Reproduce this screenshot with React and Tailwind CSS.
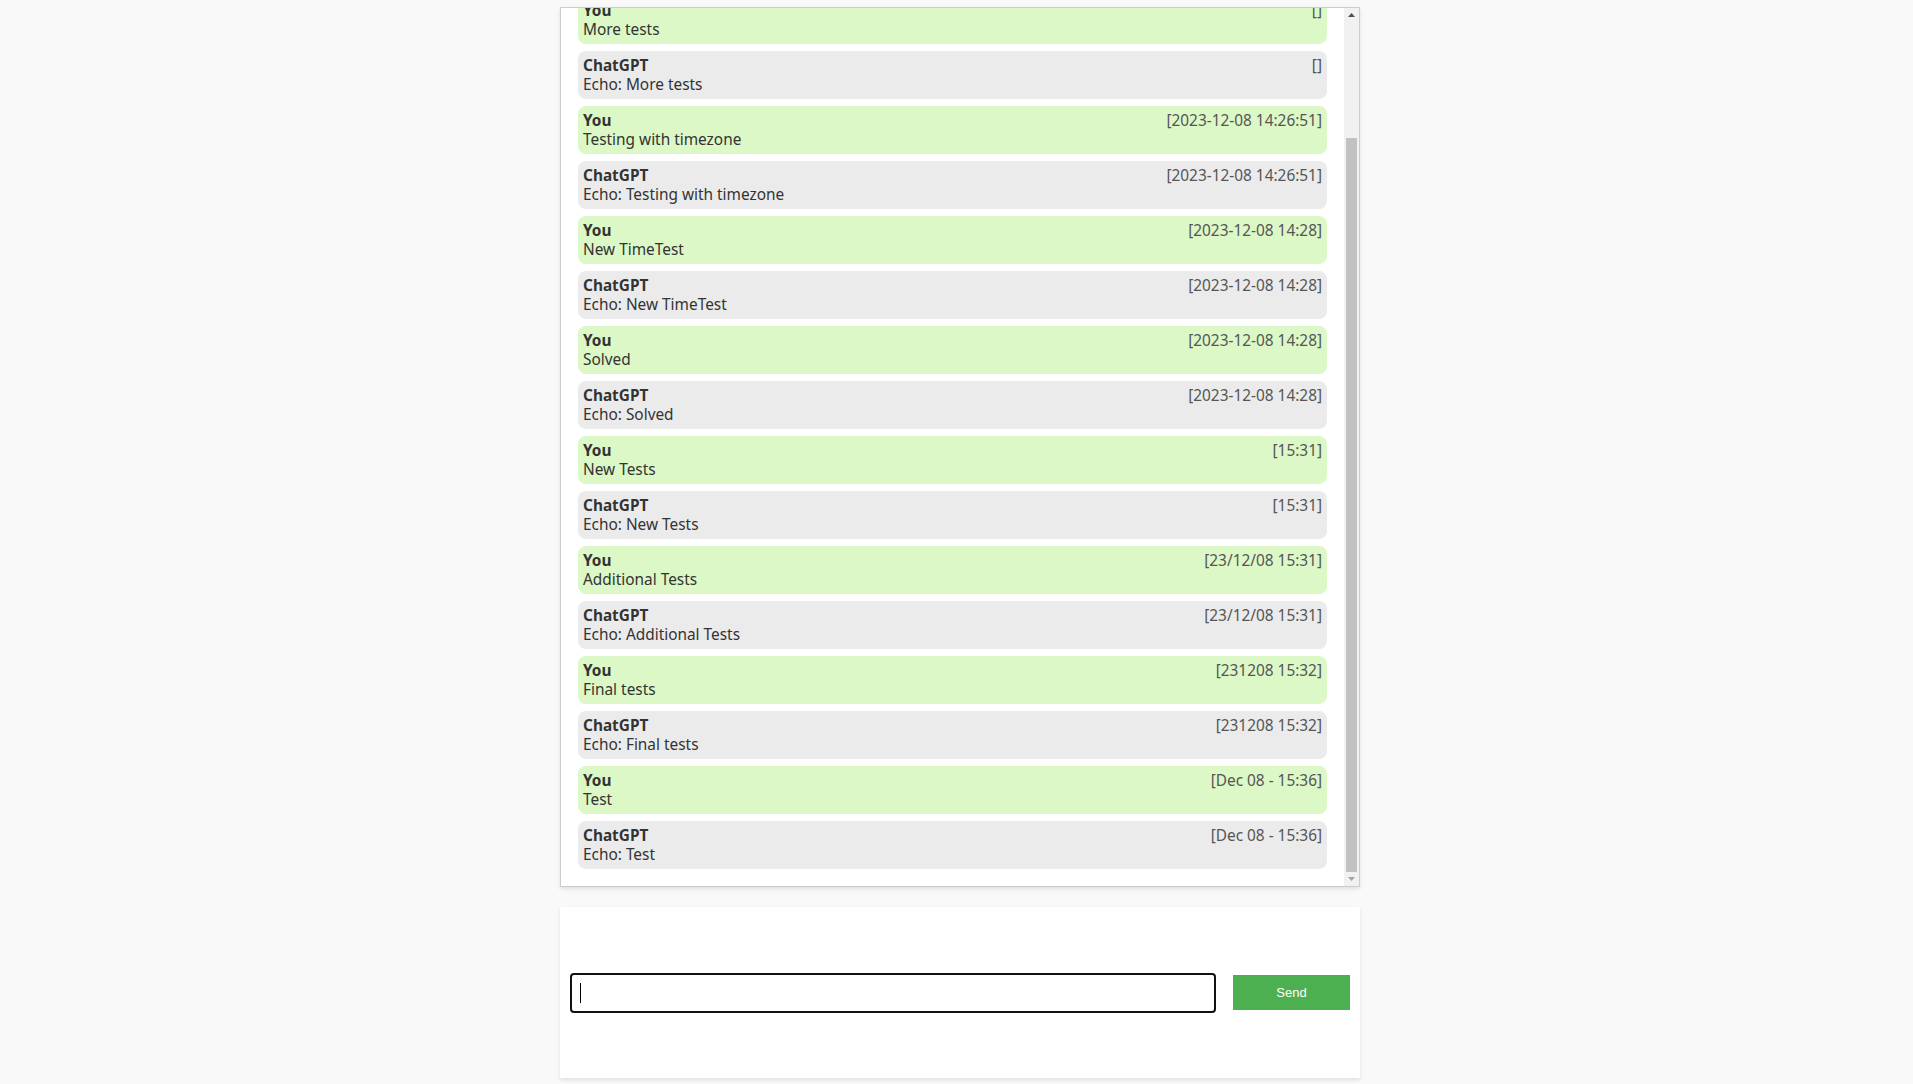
import React, { useEffect, useRef } from 'react';

const messages = [
  { from: 'You', time: '[]', text: 'Hello' },
  { from: 'ChatGPT', time: '[]', text: 'Echo: Hello' },
  { from: 'You', time: '[]', text: 'More tests' },
  { from: 'ChatGPT', time: '[]', text: 'Echo: More tests' },
  { from: 'You', time: '[2023-12-08 14:26:51]', text: 'Testing with timezone' },
  { from: 'ChatGPT', time: '[2023-12-08 14:26:51]', text: 'Echo: Testing with timezone' },
  { from: 'You', time: '[2023-12-08 14:28]', text: 'New TimeTest' },
  { from: 'ChatGPT', time: '[2023-12-08 14:28]', text: 'Echo: New TimeTest' },
  { from: 'You', time: '[2023-12-08 14:28]', text: 'Solved' },
  { from: 'ChatGPT', time: '[2023-12-08 14:28]', text: 'Echo: Solved' },
  { from: 'You', time: '[15:31]', text: 'New Tests' },
  { from: 'ChatGPT', time: '[15:31]', text: 'Echo: New Tests' },
  { from: 'You', time: '[23/12/08 15:31]', text: 'Additional Tests' },
  { from: 'ChatGPT', time: '[23/12/08 15:31]', text: 'Echo: Additional Tests' },
  { from: 'You', time: '[231208 15:32]', text: 'Final tests' },
  { from: 'ChatGPT', time: '[231208 15:32]', text: 'Echo: Final tests' },
  { from: 'You', time: '[Dec 08 - 15:36]', text: 'Test' },
  { from: 'ChatGPT', time: '[Dec 08 - 15:36]', text: 'Echo: Test' },
];

const App = () => {
  const listRef = useRef(null);

  // keep the newest message in view
  useEffect(() => {
    if (listRef.current) listRef.current.scrollTop = listRef.current.scrollHeight;
  }, []);

  return (
    <div className="min-h-screen bg-[#f9f9f9] pt-[7px] font-['Noto_Sans',sans-serif] text-[15.4px] text-[#333]">
      <div className="w-[800px] ml-[560px]">
        {/* Chat history */}
        <div className="h-[880px] flex bg-white border border-[#ccc] shadow-[0_2px_4px_rgba(0,0,0,0.1)]">
          <div
            ref={listRef}
            className="flex-1 overflow-y-scroll [scrollbar-width:none] px-[17px] py-[10px]"
          >
            {messages.map((m, i) => (
              <div
                key={i}
                className={`${m.from === 'You' ? 'bg-[#dcf8c6]' : 'bg-[#ebebeb]'} rounded-[8px] p-[5px] mb-[7px] leading-[19px]`}
              >
                <div className="flex justify-between">
                  <span className="font-bold">{m.from}</span>
                  <span className="text-[#555]">{m.time}</span>
                </div>
                <div>{m.text}</div>
              </div>
            ))}
          </div>

          {/* scrollbar */}
          <div className="w-[15px] flex flex-col bg-[#f1f1f1]">
            <div className="h-[15px] flex items-center justify-center">
              <svg width="7" height="4" viewBox="0 0 7 4"><path d="M3.5 0L7 4H0z" fill="#505050" /></svg>
            </div>
            <div className="flex-1 pt-[115px] px-[2px]">
              <div className="h-[734px] bg-[#c1c1c1]" />
            </div>
            <div className="h-[15px] flex items-center justify-center">
              <svg width="7" height="4" viewBox="0 0 7 4"><path d="M0 0H7L3.5 4z" fill="#a3a3a3" /></svg>
            </div>
          </div>
        </div>

        {/* Input area */}
        <div className="mt-[20px] h-[171px] bg-white shadow-[0_2px_4px_rgba(0,0,0,0.1)] flex items-center px-[10px] gap-[17px]">
          <div className="relative">
            <input
              type="text"
              className="w-[646px] h-[40px] border-2 border-[#111] rounded-[4px] px-[10px] outline-none"
            />
            <span className="absolute left-[10px] top-[10px] w-px h-[20px] bg-black" />
          </div>
          <button className="w-[117px] h-[35px] bg-[#4caf50] text-white text-[13px] font-['Liberation_Sans',sans-serif]">
            Send
          </button>
        </div>
      </div>
    </div>
  );
};

export default App;
